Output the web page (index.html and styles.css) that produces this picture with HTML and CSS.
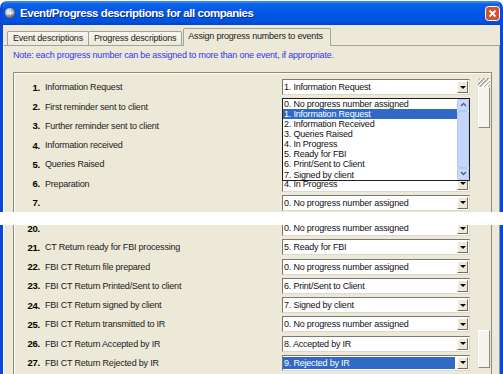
FILE: index.html
```html
<!DOCTYPE html>
<html lang="en">
<head>
  <meta charset="UTF-8" />
  <title>Event/Progress descriptions for all companies</title>
  <link rel="stylesheet" href="styles.css">
</head>
<body>
  <!-- Upper part of the dialog: rows 1 to 7 -->
  <div class="window window-upper">
    <div class="titlebar">
      <svg class="app-icon" width="12" height="12" viewBox="0 0 12 12">
        <defs>
          <radialGradient id="globe" cx="35%" cy="30%" r="75%">
            <stop offset="0" stop-color="#eef2fa"/>
            <stop offset="1" stop-color="#4f5f80"/>
          </radialGradient>
        </defs>
        <circle cx="6" cy="6" r="5.5" fill="url(#globe)" stroke="#24366a" stroke-width="0.6"/>
        <path d="M2.5 6.2h7M4 4.4v3.6M6.5 4.4v3.6M8 4.4v1.8" stroke="#fff" stroke-width="0.8"/>
      </svg>
      <span class="title">Event/Progress descriptions for all companies</span>
      <svg class="close" width="15" height="15" viewBox="0 0 15 15">
        <rect x="0.5" y="0.5" width="14" height="14" rx="3" fill="#d6512e" stroke="#fff"/>
        <path d="M4.5 4.5l6 6M10.5 4.5l-6 6" stroke="#fff" stroke-width="1.8"/>
      </svg>
    </div>

    <div class="tabs">
      <div class="tab">Event descriptions</div>
      <div class="tab">Progress descriptions</div>
      <div class="tab active">Assign progress numbers to events</div>
    </div>

    <div class="panel">
      <p class="note">Note: each progress number can be assigned to more than one event, if appropriate.</p>

      <div class="group group-top">
        <div class="rows">
          <div class="row"><span class="num">1.</span><span class="label">Information Request</span><div class="combo"><span class="value">1. Information Request</span><span class="drop"></span></div></div>
          <!-- rows 2-5: combos hidden under the open list -->
          <div class="row"><span class="num">2.</span><span class="label">First reminder sent to client</span><div class="combo"><span class="value"></span><span class="drop"></span></div></div>
          <div class="row"><span class="num">3.</span><span class="label">Further reminder sent to client</span><div class="combo"><span class="value"></span><span class="drop"></span></div></div>
          <div class="row"><span class="num">4.</span><span class="label">Information received</span><div class="combo"><span class="value"></span><span class="drop"></span></div></div>
          <div class="row"><span class="num">5.</span><span class="label">Queries Raised</span><div class="combo"><span class="value"></span><span class="drop"></span></div></div>
          <div class="row"><span class="num">6.</span><span class="label">Preparation</span><div class="combo"><span class="value">4. In Progress</span><span class="drop"></span></div></div>
          <div class="row"><span class="num">7.</span><span class="label"></span><div class="combo"><span class="value">0. No progress number assigned</span><span class="drop"></span></div></div>
        </div>
        <div class="vscroll vscroll-top">
          <div class="grip"></div>
          <div class="thumb thumb-top"></div>
        </div>

        <!-- open dropdown of row 1 -->
        <div class="droplist">
          <div class="items">
            <div class="item">0. No progress number assigned</div>
            <div class="item selected">1. Information Request</div>
            <div class="item">2. Information Received</div>
            <div class="item">3. Queries Raised</div>
            <div class="item">4. In Progress</div>
            <div class="item">5. Ready for FBI</div>
            <div class="item">6. Print/Sent to Client</div>
            <div class="item">7. Signed by client</div>
          </div>
          <div class="lscroll">
            <div class="lbtn"><svg width="7" height="5" viewBox="0 0 7 5"><path d="M1 4l2.5-2.5L6 4" fill="none" stroke="#4d6185" stroke-width="1.4"/></svg></div>
            <div class="lthumb"></div>
            <div class="lbtn"><svg width="7" height="5" viewBox="0 0 7 5"><path d="M1 1l2.5 2.5L6 1" fill="none" stroke="#4d6185" stroke-width="1.4"/></svg></div>
          </div>
        </div>
      </div>
    </div>
  </div>

  <!-- Lower part of the dialog: rows 20 to 27 -->
  <div class="window window-lower">
    <div class="panel panel-lower">
      <div class="group group-bottom">
        <div class="rows rows-lower">
          <div class="row"><span class="num">20.</span><span class="label"></span><div class="combo"><span class="value">0. No progress number assigned</span><span class="drop"></span></div></div>
          <div class="row"><span class="num">21.</span><span class="label">CT Return ready for FBI processing</span><div class="combo"><span class="value">5. Ready for FBI</span><span class="drop"></span></div></div>
          <div class="row"><span class="num">22.</span><span class="label">FBI CT Return file prepared</span><div class="combo"><span class="value">0. No progress number assigned</span><span class="drop"></span></div></div>
          <div class="row"><span class="num">23.</span><span class="label">FBI CT Return Printed/Sent to client</span><div class="combo"><span class="value">6. Print/Sent to Client</span><span class="drop"></span></div></div>
          <div class="row"><span class="num">24.</span><span class="label">FBI CT Return signed by client</span><div class="combo"><span class="value">7. Signed by client</span><span class="drop"></span></div></div>
          <div class="row"><span class="num">25.</span><span class="label">FBI CT Return transmitted to IR</span><div class="combo"><span class="value">0. No progress number assigned</span><span class="drop"></span></div></div>
          <div class="row"><span class="num">26.</span><span class="label">FBI CT Return Accepted by IR</span><div class="combo"><span class="value">8. Accepted by IR</span><span class="drop"></span></div></div>
          <div class="row"><span class="num">27.</span><span class="label">FBI CT Return Rejected by IR</span><div class="combo focused"><span class="value">9. Rejected by IR</span><span class="drop"></span></div></div>
        </div>
        <div class="vscroll vscroll-bottom">
          <div class="thumb thumb-bottom"></div>
        </div>
      </div>
    </div>
  </div>
</body>
</html>
```

FILE: styles.css
```css
body {
  margin: 0;
  background: #fff;
  font-family: "Liberation Sans", Arial, sans-serif;
  font-size: 9px;
  letter-spacing: -0.2px;
  color: #111;
}

.window {
  width: 497px;
  background: #ece9d8;
  border-left: 3px solid #0b48d9;
  border-right: 3px solid #0b48d9;
  overflow: hidden;
}

.window-upper {
  height: 211px;
  margin-top: 1px;
  border-radius: 7px 7px 0 0;
}

.window-lower {
  height: 149px;
  margin-top: 13px;
}

/* title bar */
.titlebar {
  height: 24px;
  display: flex;
  align-items: center;
  padding: 0 0 0 1px;
  background: linear-gradient(#4a93f7 0, #0d62e8 3px, #0058e6 45%, #0052df 85%, #0045cc 100%);
}

.app-icon {
  flex: none;
}

.title {
  margin-left: 4px;
  color: #fff;
  font-size: 11.5px;
  font-weight: bold;
  letter-spacing: -0.45px;
  text-shadow: 1px 1px 0 #0a2a88;
}

.close {
  margin-left: auto;
  flex: none;
}

/* tabs */
.tabs {
  height: 20px;
  display: flex;
  align-items: flex-end;
  padding-left: 4px;
}

.tab {
  height: 13px;
  line-height: 13px;
  padding: 0 5px;
  border: 1px solid #a5a396;
  border-bottom: none;
  border-radius: 2px 2px 0 0;
  background: linear-gradient(#f7f6f0, #ebe9dd);
  color: #1a1a1a;
}

.tab + .tab {
  margin-left: -1px;
}

.tab.active {
  height: 17px;
  line-height: 15px;
  margin-left: 1px;
  margin-bottom: -1px;
  padding: 0 7px 0 4px;
  background: #ece9d8;
  position: relative;
  z-index: 1;
}

/* tab page */
.panel {
  border-top: 1px solid #a5a396;
  border-left: 1px solid #fbfbf6;
  border-right: 1px solid #919b9c;
  padding: 0 7px 0 9px;
  height: 100%;
}

.panel-lower {
  border-top: none;
}

.note {
  margin: 4px 0 0 0;
  line-height: 11px;
  color: #3636e6;
}

.group {
  display: flex;
  border: 1px solid #8d8b80;
  border-bottom: none;
  box-shadow: inset 1px 1px 0 #fff;
  height: 100%;
}

.group-top {
  margin-top: 11px;
  position: relative;
}

.group-bottom {
  border-top: none;
  box-shadow: inset 1px 0 0 #fff;
}

.rows {
  flex: 1;
  padding: 4.7px 8px 0 0;
}

.rows-lower {
  padding-top: 0;
  margin-top: -6.6px;
}

.row {
  height: 19.25px;
  display: grid;
  grid-template-columns: 26px 1fr 188px;
  column-gap: 5px;
  align-items: center;
}

.num {
  text-align: right;
  font-weight: bold;
  font-size: 9.5px;
  color: #000;
}

.label {
  color: #1a1a1a;
}

/* combo boxes */
.combo {
  height: 14px;
  display: flex;
  align-items: stretch;
  background: #fff;
  border: 1px solid;
  border-color: #7a7870 #dcd9cc #dcd9cc #7a7870;
}

.value {
  flex: 1;
  padding-left: 1px;
  line-height: 14px;
  white-space: nowrap;
  overflow: hidden;
  color: #111;
}

.combo.focused .value {
  margin: 1px 1px 1px 0;
  line-height: 12px;
  background: #3169c6;
  color: #fff;
}

.drop {
  width: 9px;
  margin: 1px;
  display: flex;
  align-items: center;
  justify-content: center;
  background: #ece9d8;
  border: 1px solid;
  border-color: #fff #716f64 #716f64 #fff;
}

.drop::after {
  content: "";
  border-top: 3px solid #000;
  border-left: 3px solid transparent;
  border-right: 3px solid transparent;
}

/* scroll bar of the event list */
.vscroll {
  width: 12px;
  margin-right: 1px;
}

.vscroll-top {
  padding-top: 5px;
}

.vscroll-bottom {
  padding-top: 105px;
}

.grip {
  height: 9px;
  background: repeating-linear-gradient(135deg, #fff 0 1px, #a9a79b 1px 2px, transparent 2px 3px);
}

.thumb {
  background: #f5f4ee;
  border: 1px solid;
  border-color: #fff #8b8a82 #8b8a82 #fff;
}

.thumb-top {
  height: 39px;
}

.thumb-bottom {
  height: 36px;
}

/* open drop-down list */
.droplist {
  position: absolute;
  left: 268px;
  top: 24.7px;
  width: 186px;
  height: 81px;
  display: flex;
  background: #fff;
  border: 1px solid #1c1c1c;
  z-index: 2;
}

.items {
  flex: 1;
}

.item {
  height: 10.125px;
  line-height: 10.125px;
  padding-left: 1px;
  white-space: nowrap;
  color: #111;
}

.item.selected {
  background: #3169c6;
  color: #fff;
}

.lscroll {
  width: 12px;
  display: flex;
  flex-direction: column;
  background: #f3f6fd;
}

.lbtn {
  height: 10px;
  display: flex;
  align-items: center;
  justify-content: center;
  background: #c9d8fb;
  border: 1px solid #b3c8f5;
  border-radius: 2px;
}

.lthumb {
  flex: 1;
  background: #c5d6fc;
  border: 1px solid #b3c8f5;
  border-radius: 2px;
}
```
